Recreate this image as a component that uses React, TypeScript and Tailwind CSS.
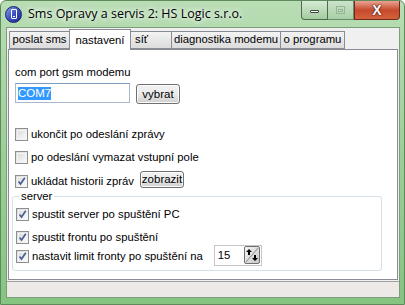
import React from "react";

const font = { fontFamily: '"Liberation Sans", Arial, sans-serif' };

function Check({ checked }: { checked?: boolean }) {
  return (
    <div className="w-[13px] h-[13px] border border-[#8e8f8f] bg-gradient-to-br from-[#dadada] to-[#fbfbfb] shrink-0 relative">
      <div className="absolute inset-[1px] border border-[#f4f4f4] bg-gradient-to-br from-[#dcdcdc] to-[#f8f8f8]" />
      {checked && (
        <svg width="11" height="11" viewBox="0 0 11 11" className="absolute left-0 top-0">
          <path d="M2.5 5.5 L4.5 8 L8.8 1.8" fill="none" stroke="#4b5e95" strokeWidth="1.7" />
        </svg>
      )}
    </div>
  );
}

function Btn({ children, className = "" }: { children: React.ReactNode; className?: string }) {
  return (
    <div
      className={
        "border border-[#707070] rounded-[3px] bg-gradient-to-b from-[#f2f2f2] via-[#ebebeb] to-[#cfcfcf] text-[11.5px] text-black flex items-center justify-center leading-none shadow-[inset_0_0_0_1px_#fcfcfc] shrink-0 " +
        className
      }
    >
      {children}
    </div>
  );
}

function Row({ checked, label, className = "", children }: { checked?: boolean; label: string; className?: string; children?: React.ReactNode }) {
  return (
    <div className={"flex items-center h-[13px] " + className}>
      <Check checked={checked} />
      <span className="ml-[3px] text-[11.3px] leading-none text-black whitespace-nowrap">{label}</span>
      {children}
    </div>
  );
}

const tabInactive =
  "h-[18px] border border-[#898c95] bg-gradient-to-b from-[#f3f3f3] to-[#dcdcdc] flex items-center leading-none whitespace-nowrap";

export default function App() {
  return (
    <div
      className="w-[405px] h-[305px] relative overflow-hidden rounded-t-[6px] bg-gradient-to-b from-[#b9ddb5] via-[#9ccf98] to-[#86c482] border border-[#5e8a5c]"
      style={font}
    >
      {/* title bar */}
      <div className="h-[26px] flex items-center pl-[4px]">
        <div className="w-[17px] h-[17px] rounded-full bg-gradient-to-br from-[#8da2f0] via-[#3a4fc4] to-[#1c2a8a] border border-[#1b2466] flex items-center justify-center">
          <div className="w-[6px] h-[10px] border border-white rounded-[1px] flex items-end justify-center">
            <div className="w-[2px] h-[1px] bg-white mb-[1px]" />
          </div>
        </div>
        <span
          className="ml-[6px] text-[12.5px] text-black"
          style={{ fontFamily: '"Open Sans", "Liberation Sans", sans-serif', textShadow: "0 0 8px #ffffff, 0 0 4px #ffffff" }}
        >
          Sms Opravy a servis 2: HS Logic s.r.o.
        </span>
      </div>
      {/* caption buttons */}
      <div className="absolute top-0 right-[4px] flex h-[19px]">
        <div className="w-[27px] h-full border border-[#506a50] border-t-0 rounded-bl-[4px] bg-gradient-to-b from-[#d6ead5] to-[#a3cca0] flex items-center justify-center">
          <div className="w-[9px] h-[3px] bg-white border border-[#3b4a3b] rounded-[1px] mt-[3px]" />
        </div>
        <div className="w-[26px] h-full border-b border-r border-[#6d896c] bg-gradient-to-b from-[#cbe3ca] to-[#a8cfa5] flex items-center justify-center">
          <div className="w-[9px] h-[8px] border border-[#98b497] flex items-center justify-center">
            <div className="w-[5px] h-[3px] border border-[#98b497]" />
          </div>
        </div>
        <div className="w-[46px] h-full border border-[#6e2b1c] border-t-0 rounded-br-[4px] bg-gradient-to-b from-[#e8a493] via-[#c74a2d] to-[#d3623c] flex items-center justify-center">
          <span className="text-white font-bold text-[14px] leading-none" style={{ textShadow: "0 0 1px #3a0d05, 0 0 2px #3a0d05" }}>
            X
          </span>
        </div>
      </div>

      {/* client */}
      <div className="absolute left-[5px] right-[4px] top-[26px] bottom-[6px] bg-[#f0f0f0] border border-[#7d9c7c] flex flex-col">
        {/* tabs */}
        <div className="h-[21px] flex items-end pl-[2px] text-[11.3px] text-black">
          <div className={tabInactive + " w-[60px] border-r-0 justify-center"}>poslat sms</div>
          <div className="h-[21px] w-[62px] border border-[#898c95] border-b-0 bg-white flex items-start pt-[5px] justify-center leading-none relative z-10 -mb-[1px] whitespace-nowrap">
            nastavení
          </div>
          <div className={tabInactive + " w-[41px] border-l-0 pl-[4px]"}>síť</div>
          <div className={tabInactive + " w-[109px] border-l-0 justify-center"}>diagnostika modemu</div>
          <div className={tabInactive + " w-[64px] border-l-0 justify-center"}>o programu</div>
        </div>
        {/* tab page */}
        <div className="h-[231px] mx-[1px] border border-[#898c95] bg-white pl-[6px] pt-[17px]">
          <div className="text-[11.3px] leading-none text-black">com port gsm modemu</div>
          <div className="flex items-start mt-[5px]">
            <div className="w-[115px] h-[20px] border border-[#aab8cc] border-t-[#7f9db9] bg-white flex items-center pl-[2px]">
              <span className="bg-[#3399ff] text-white text-[11.5px] leading-[13px]">COM7</span>
            </div>
            <Btn className="ml-[6px] mt-[1px] w-[44px] h-[20px]">vybrat</Btn>
          </div>
          <Row label="ukončit po odeslání zprávy" className="mt-[24px]" />
          <Row label="po odeslání vymazat vstupní pole" className="mt-[10px]" />
          <div className="flex items-center h-[13px] mt-[11px]">
            <Row checked label="ukládat historii zpráv" />
            <Btn className="ml-[6px] w-[44px] h-[17px] -mt-[5px]">zobrazit</Btn>
          </div>
          {/* group box */}
          <div className="relative mt-[8px] -ml-[3px] w-[370px] h-[75px] border border-[#d5dfe5] rounded-[3px] pl-[3px] pt-[11px]">
            <span className="absolute -top-[6px] left-[6px] bg-white px-[2px] text-[11.3px] leading-none text-black">server</span>
            <Row checked label="spustit server po spuštění PC" />
            <Row checked label="spustit frontu po spuštění" className="mt-[10px]" />
            <div className="flex items-center h-[13px] mt-[6px]">
              <Row checked label="nastavit limit fronty po spuštění na" />
              <div className="ml-[11px] w-[48px] h-[21px] shrink-0 border border-[#c6c6c6] bg-white flex items-center pl-[3px] justify-between mt-[-3px]">
                <span className="text-[11.3px] leading-none text-black">15</span>
                <div className="w-[16px] h-[18px] border border-[#707070] rounded-[2px] bg-gradient-to-br from-[#f4f4f4] to-[#c9c9c9] mr-[1px] relative">
                  <svg width="14" height="16" viewBox="0 0 14 16" className="absolute inset-0">
                    <line x1="13" y1="1" x2="1" y2="15" stroke="#8a8a8a" strokeWidth="1" />
                    <path d="M4 2 L1 5 H3 V8 H5 V5 H7 Z" fill="#000" />
                    <path d="M10 14 L7 11 H9 V8 H11 V11 H13 Z" fill="#000" />
                  </svg>
                </div>
              </div>
            </div>
          </div>
        </div>
        {/* status bar */}
        <div className="flex-1 mt-[1px] border-t border-[#a0a0a0] bg-[#ede9e7]" />
      </div>
    </div>
  );
}
